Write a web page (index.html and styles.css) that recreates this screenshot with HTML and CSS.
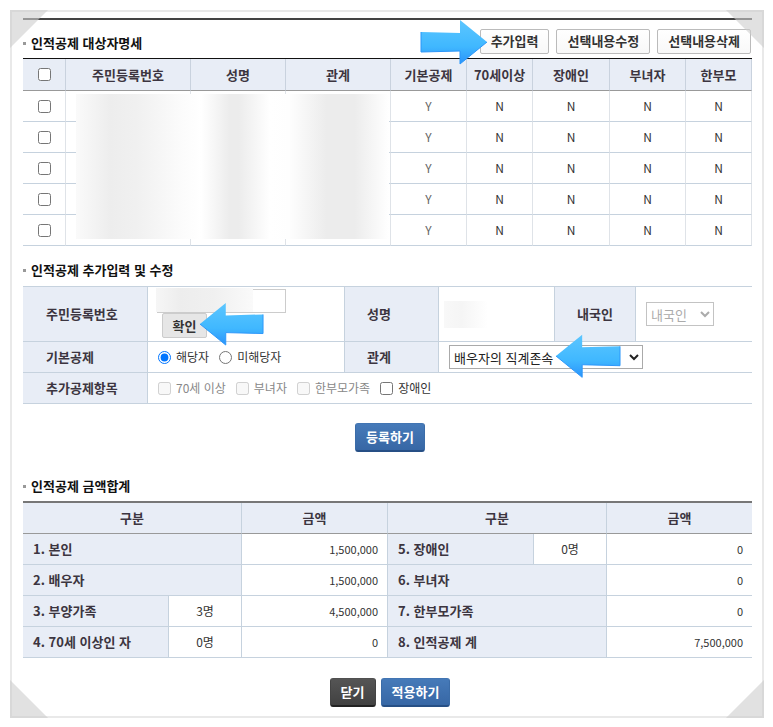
FILE: index.html
```html
<!DOCTYPE html>
<html lang="ko">
<head>
    <meta charset="UTF-8">
    <meta name="viewport" content="width=device-width, initial-scale=1.0">
    <title>인적공제</title>
    <link rel="stylesheet" href="styles.css">
</head>
<body>
    <!-- arrow shape shared by the three pointers -->
    <svg class="defs" width="0" height="0" aria-hidden="true">
        <defs>
            <linearGradient id="arrow-fill" x1="0" y1="0" x2="0" y2="1">
                <stop offset="0" stop-color="#5cc6ff"/>
                <stop offset="0.6" stop-color="#40b8ff"/>
                <stop offset="1" stop-color="#2a93fb"/>
            </linearGradient>
            <symbol id="arrow" viewBox="0 0 68 46">
                <path d="M1 23 L28 1 V14 L67 13 V33 L28 32 V45 Z" fill="url(#arrow-fill)"/>
                <path d="M1 23 L28 45 V32 L67 33 V13" fill="none" stroke="#2b96fa" stroke-width="1"/>
            </symbol>
        </defs>
    </svg>

    <main class="paper">
        <span class="corner corner-tl"></span>
        <span class="corner corner-tr"></span>
        <span class="corner corner-bl"></span>
        <span class="corner corner-br"></span>

        <section class="first">
            <div class="bar">
                <h2>인적공제 대상자명세</h2>
                <div class="tools">
                    <span class="pointed">
                        <button type="button" class="btn-line">추가입력</button>
                        <svg class="arrow arrow-add" width="68" height="46" aria-hidden="true"><use href="#arrow"/></svg>
                    </span>
                    <button type="button" class="btn-line">선택내용수정</button>
                    <button type="button" class="btn-line">선택내용삭제</button>
                </div>
            </div>
            <div class="list-wrap">
                <table class="list">
                    <colgroup>
                        <col class="w-check"><col class="w-number"><col class="w-name"><col class="w-relation">
                        <col class="w-basic"><col class="w-senior"><col class="w-disabled"><col class="w-woman"><col class="w-single">
                    </colgroup>
                    <thead>
                        <tr>
                            <th><input type="checkbox" aria-label="전체 선택"></th>
                            <th>주민등록번호</th>
                            <th>성명</th>
                            <th>관계</th>
                            <th>기본공제</th>
                            <th>70세이상</th>
                            <th>장애인</th>
                            <th>부녀자</th>
                            <th>한부모</th>
                        </tr>
                    </thead>
                    <tbody>
                        <tr><td><input type="checkbox" aria-label="1행 선택"></td><td></td><td></td><td></td><td class="yes">Y</td><td>N</td><td>N</td><td>N</td><td>N</td></tr>
                        <tr><td><input type="checkbox" aria-label="2행 선택"></td><td></td><td></td><td></td><td class="yes">Y</td><td>N</td><td>N</td><td>N</td><td>N</td></tr>
                        <tr><td><input type="checkbox" aria-label="3행 선택"></td><td></td><td></td><td></td><td class="yes">Y</td><td>N</td><td>N</td><td>N</td><td>N</td></tr>
                        <tr><td><input type="checkbox" aria-label="4행 선택"></td><td></td><td></td><td></td><td class="yes">Y</td><td>N</td><td>N</td><td>N</td><td>N</td></tr>
                        <tr><td><input type="checkbox" aria-label="5행 선택"></td><td></td><td></td><td></td><td class="yes">Y</td><td>N</td><td>N</td><td>N</td><td>N</td></tr>
                    </tbody>
                </table>
                <div class="mask mask-list"></div>
            </div>
        </section>

        <section>
            <h2 class="tall">인적공제 추가입력 및 수정</h2>
            <form>
                <table class="form">
                    <colgroup>
                        <col class="f-label"><col class="f-number"><col class="f-label2"><col class="f-name"><col class="f-label3"><col class="f-nation">
                    </colgroup>
                    <tbody>
                        <tr class="row-id">
                            <th><label for="jumin">주민등록번호</label></th>
                            <td class="cell-id">
                                <div class="id-box">
                                    <input type="text" id="jumin">
                                    <div class="mask mask-id"></div>
                                </div>
                                <span class="pointed confirm">
                                    <button type="button" class="btn-gray">확인</button>
                                    <svg class="arrow arrow-confirm" width="65" height="44" aria-hidden="true"><use href="#arrow"/></svg>
                                </span>
                            </td>
                            <th>성명</th>
                            <td class="cell-name"><div class="mask mask-name"></div></td>
                            <th><label for="nation">내국인</label></th>
                            <td><select id="nation" class="sel-nation" disabled><option>내국인</option></select></td>
                        </tr>
                        <tr>
                            <th>기본공제</th>
                            <td>
                                <div class="options">
                                    <label><input type="radio" name="basic" checked>해당자</label>
                                    <label><input type="radio" name="basic">미해당자</label>
                                </div>
                            </td>
                            <th><label for="relation">관계</label></th>
                            <td colspan="3">
                                <span class="pointed">
                                    <select id="relation" class="sel-relation"><option>배우자의 직계존속</option></select>
                                    <svg class="arrow arrow-relation" width="66" height="46" aria-hidden="true"><use href="#arrow"/></svg>
                                </span>
                            </td>
                        </tr>
                        <tr>
                            <th>추가공제항목</th>
                            <td colspan="5">
                                <div class="options">
                                    <label class="off"><input type="checkbox" disabled>70세 이상</label>
                                    <label class="off"><input type="checkbox" disabled>부녀자</label>
                                    <label class="off"><input type="checkbox" disabled>한부모가족</label>
                                    <label><input type="checkbox">장애인</label>
                                </div>
                            </td>
                        </tr>
                    </tbody>
                </table>
                <div class="actions">
                    <button type="button" class="btn btn-blue">등록하기</button>
                </div>
            </form>
        </section>

        <section>
            <h2>인적공제 금액합계</h2>
            <table class="sum">
                <colgroup>
                    <col class="s-label"><col class="s-count"><col class="s-amount"><col class="s-label"><col class="s-count"><col class="s-last">
                </colgroup>
                <thead>
                    <tr>
                        <th colspan="2">구분</th>
                        <th>금액</th>
                        <th colspan="2">구분</th>
                        <th>금액</th>
                    </tr>
                </thead>
                <tbody>
                    <tr>
                        <th colspan="2">1. 본인</th><td class="amount">1,500,000</td>
                        <th>5. 장애인</th><td class="count">0명</td><td class="amount">0</td>
                    </tr>
                    <tr>
                        <th colspan="2">2. 배우자</th><td class="amount">1,500,000</td>
                        <th colspan="2">6. 부녀자</th><td class="amount">0</td>
                    </tr>
                    <tr>
                        <th>3. 부양가족</th><td class="count">3명</td><td class="amount">4,500,000</td>
                        <th colspan="2">7. 한부모가족</th><td class="amount">0</td>
                    </tr>
                    <tr>
                        <th>4. 70세 이상인 자</th><td class="count">0명</td><td class="amount">0</td>
                        <th colspan="2">8. 인적공제 계</th><td class="amount">7,500,000</td>
                    </tr>
                </tbody>
            </table>
        </section>

        <div class="actions actions-end">
            <button type="button" class="btn btn-dark">닫기</button>
            <button type="button" class="btn btn-blue">적용하기</button>
        </div>
    </main>
</body>
</html>
```
FILE: styles.css
```css
* {
    box-sizing: border-box;
}
body {
    margin: 10px 9px 9px 10px;
    background: #fff;
    color: #333;
    font: 13px/18px "Noto Sans CJK KR", sans-serif;
}
button, input, select {
    font: inherit;
    margin: 0;
}
.defs {
    position: absolute;
}
.paper {
    position: relative;
    border: 2px solid #e9e9e9;
    padding: 6px 10px 9px 11px;
}

/* folded paper corners */
.corner {
    position: absolute;
    width: 38px;
    height: 38px;
    background: rgba(205, 205, 205, 0.6);
    z-index: 2;
    pointer-events: none;
}
.corner-tl {
    top: -2px;
    left: -2px;
    clip-path: polygon(0 0, 100% 0, 0 100%);
}
.corner-tr {
    top: -2px;
    right: -2px;
    clip-path: polygon(0 0, 100% 0, 100% 100%);
}
.corner-bl {
    bottom: -2px;
    left: -2px;
    clip-path: polygon(0 0, 100% 100%, 0 100%);
}
.corner-br {
    bottom: -2px;
    right: -2px;
    clip-path: polygon(100% 0, 100% 100%, 0 100%);
}

/* section titles */
.first {
    border-top: 2px solid #444;
}
h2 {
    display: flex;
    align-items: center;
    height: 38px;
    margin: 0;
    padding-top: 8px;
    color: #111;
    font-size: 13px;
    font-weight: bold;
}
h2::before {
    content: "";
    width: 3px;
    height: 3px;
    margin-right: 5px;
    background: #999;
}
h2.tall {
    height: 40px;
}
.bar {
    display: flex;
    justify-content: space-between;
}
.tools {
    display: flex;
    align-items: center;
    gap: 7px;
    padding: 4px 1px 0 0;
}
.pointed {
    position: relative;
    display: inline-flex;
}

/* buttons */
.btn-line {
    height: 25px;
    padding: 0 10px;
    border: 1px solid #bbb;
    border-radius: 2px;
    background: linear-gradient(#fff, #f8f8f8);
    color: #333;
    font-weight: bold;
    line-height: 20px;
}
.btn-gray {
    width: 45px;
    height: 25px;
    padding: 0;
    border: 1px solid #ccc;
    border-radius: 2px;
    background: #e6e6e6;
    color: #333;
    font-weight: bold;
    line-height: 20px;
}
.btn {
    height: 29px;
    padding: 0 10px;
    border: 1px solid;
    border-bottom-width: 2px;
    border-radius: 3px;
    color: #fff;
    font-weight: bold;
    line-height: 22px;
}
.btn-blue {
    border-color: #4275b3 #3b6ca8 #264f85;
    background: linear-gradient(#467ab9, #3767a5);
}
.btn-dark {
    border-color: #505050 #444 #222;
    background: linear-gradient(#555, #414141);
}
.actions {
    display: flex;
    justify-content: center;
    gap: 5px;
    padding: 19px 0 11px 5px;
}
.actions-end {
    padding-top: 20px;
    padding-bottom: 0;
}

/* tables */
table {
    width: 100%;
    table-layout: fixed;
    border-spacing: 0;
}
th, td {
    height: 31px;
    padding: 0;
    border-bottom: 1px solid #c6d2de;
}
th {
    background: #e8edf6;
    color: #3c3540;
}
input[type=checkbox], input[type=radio] {
    width: 13px;
    height: 13px;
}

.list-wrap {
    position: relative;
}
.list {
    border-top: 1px solid #111;
    text-align: center;
}
.list th, .list td {
    border-right: 1px solid #dfe3e8;
}
.list th {
    height: 32px;
    border-right-color: #c9d2de;
    border-bottom-color: #999;
}
.list td {
    font-size: 12px;
}
.list .yes {
    color: #666;
}
.list input {
    display: block;
    margin: 0 auto;
}
.w-check { width: 43px; }
.w-number { width: 125px; }
.w-name { width: 95px; }
.w-relation { width: 105px; }
.w-basic { width: 76px; }
.w-senior { width: 66px; }
.w-disabled { width: 77px; }
.w-woman { width: 76px; }
.w-single { width: 66px; }

.form {
    border-top: 1px solid #c6d2de;
}
.form th {
    padding-left: 23px;
    border-right: 1px solid #c6d2de;
    text-align: left;
}
.form td + th {
    padding-left: 22px;
    border-left: 1px solid #c6d2de;
}
.form td {
    padding-left: 10px;
}
.form .row-id th, .form .row-id td {
    height: 55px;
}
.f-label { width: 125px; }
.f-number { width: 196px; }
.f-label2 { width: 95px; }
.f-name { width: 115px; }
.f-label3 { width: 82px; }
.f-nation { width: 116px; }

.form .cell-id {
    padding: 2px 0 2px 9px;
    vertical-align: top;
}
.id-box {
    position: relative;
    height: 24px;
}
.id-box input {
    display: block;
    width: 129px;
    height: 24px;
    border: 1px solid #ccc;
}
.confirm {
    display: flex;
    margin-left: 5px;
}
.options {
    display: flex;
    gap: 10px;
    font-size: 12px;
}
.options label {
    display: flex;
    align-items: center;
    gap: 5px;
}
.off {
    color: #888;
}
select {
    display: block;
    height: 24px;
    padding: 0;
    border: 1px solid #aaa;
    background: #fff;
    color: #222;
}
.sel-relation {
    width: 194px;
}
.sel-nation {
    width: 68px;
    border-color: #aaa;
    color: #888;
}

.sum {
    border-top: 2px solid #777;
}
.sum th, .sum td {
    border-right: 1px solid #c6d2de;
}
.sum th:last-child, .sum td:last-child {
    border-right: 0;
}
.sum thead th {
    border-bottom-color: #999;
}
.sum tbody th {
    padding-left: 10px;
    text-align: left;
}
.sum .count {
    font-size: 12px;
    text-align: center;
}
.sum .amount {
    padding-right: 9px;
    font-size: 11px;
    text-align: right;
}
.s-label { width: 146px; }
.s-count { width: 73px; }
.s-amount { width: 146px; }
.s-last { width: 145px; }

/* blurred private data */
.mask {
    position: absolute;
}
.mask-list {
    top: 36px;
    left: 53px;
    width: 43%;
    height: 145px;
    background: linear-gradient(90deg, #fafafa 0, #ededed 11%, #f0f0f0 19%, #fbfbfb 33%, #fff 40%, #ececec 49%, #ececec 52%, #fff 62%, #fefefe 68%, #ececec 80%, #ececec 89%, #fff 100%);
}
.mask-id {
    top: -1px;
    left: -1px;
    width: 97px;
    height: 24px;
    background: linear-gradient(90deg, #f6f6f6, #ededed 25%, #f0f0f0 60%, #fafafa);
}
.mask-name {
    position: static;
    width: 44px;
    height: 27px;
    background: linear-gradient(90deg, #f8f8f8, #f5f5f5 40%, #fff);
}
.form .cell-name {
    padding-left: 5px;
}

/* pointers */
.arrow {
    position: absolute;
    z-index: 1;
    pointer-events: none;
}
.arrow-add {
    top: -10px;
    left: -60px;
    transform: scaleX(-1);
}
.arrow-confirm {
    top: -11px;
    left: 37px;
}
.arrow-relation {
    top: -12px;
    left: 106px;
}
```
